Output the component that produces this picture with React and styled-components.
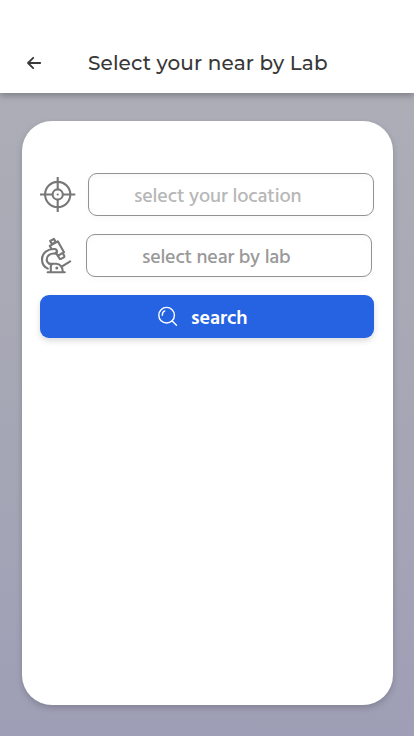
import React from 'react';
import styled, { createGlobalStyle } from 'styled-components';

const GlobalStyle = createGlobalStyle`
  * { box-sizing: border-box; }
  body { margin: 0; }
`;

const Screen = styled.div`
  display: flex;
  flex-direction: column;
  width: 100%;
  height: 100vh;
  overflow: hidden;
  background: linear-gradient(180deg, #afafb7 0%, #a7a8b5 50%, #9e9fb6 100%);
`;

const Header = styled.header`
  display: flex;
  align-items: center;
  flex: none;
  height: 93px;
  padding: 33px 26px 0;
  background: #fff;
  box-shadow: 0 3px 6px rgba(0, 0, 0, 0.25);
`;

const BackButton = styled.button`
  display: flex;
  width: 62px;
  padding: 0;
  border: 0;
  background: none;
  color: #383838;
`;

const Title = styled.h1`
  margin: 0;
  font: 500 20px/26px Montserrat, Inter, sans-serif;
  letter-spacing: 0.12px;
  color: #383838;
  white-space: nowrap;
`;

const Card = styled.main`
  display: flex;
  flex-direction: column;
  gap: 18px;
  flex: 1;
  margin: 28px 21px 31px 22px;
  padding: 52px 19px 0 18px;
  border-radius: 30px;
  background: #fff;
  box-shadow: 0 3px 6px rgba(0, 0, 0, 0.18);
`;

const FieldRow = styled.div`
  display: flex;
  align-items: center;
  gap: ${({ $gap }) => $gap}px;
  height: 43px;

  svg { flex: none; }
`;

const Field = styled.input`
  width: 286px;
  height: 43px;
  padding: 4px 0 0 ${({ $indent }) => $indent}px;
  border: 1px solid #929292;
  border-radius: 9px;
  outline: 0;
  background: #fff;
  box-shadow: 0 3px 6px rgba(0, 0, 0, 0.025), inset 0 3px 6px rgba(0, 0, 0, 0.025);
  font: 500 20px/26px Hind, "Noto Sans", sans-serif;
  letter-spacing: ${({ $tracking }) => $tracking}px;

  &::placeholder {
    color: ${({ $tone }) => $tone};
    opacity: 1;
  }
`;

const SearchButton = styled.button`
  display: flex;
  align-items: center;
  gap: 12px;
  height: 43px;
  padding: 0 0 0 118px;
  border: 0;
  border-radius: 9px;
  background: #2563e2;
  box-shadow: 0 3px 6px rgba(0, 0, 0, 0.14);
  color: #fff;
  font: 600 20px/26px Hind, "Noto Sans", sans-serif;
  letter-spacing: -0.1px;
`;

const ButtonLabel = styled.span`
  padding-top: 4px;
`;

const BackIcon = () => (
  <svg width="16" height="14" viewBox="0 0 16 14" fill="none" stroke="currentColor" strokeWidth="1.8" strokeLinecap="round" strokeLinejoin="round">
    <path d="M7.2 1.8 2 7l5.2 5.2M2.2 7h12" />
  </svg>
);

const TargetIcon = () => (
  <svg width="36" height="36" viewBox="0 0 36 36" fill="none" stroke="#777" strokeWidth="2.1">
    <circle cx="17.7" cy="17.5" r="12.6" />
    <circle cx="17.7" cy="17.5" r="5.1" />
    <path d="M17.7 0v12.4M17.7 22.6V35M0 17.5h12.6M22.8 17.5h12.5" />
    <circle cx="17.7" cy="17.5" r="1.1" fill="#777" stroke="none" />
  </svg>
);

const MicroscopeIcon = () => (
  <svg width="32" height="37" viewBox="0 0 32 37" fill="none" stroke="#777" strokeWidth="2.1" strokeLinecap="round" strokeLinejoin="round">
    <path d="m10.2 4 3.7-2.1 1.8 3.1-3.8 2.2zM9.8 8.9l8-4.6 6.2 10.9-6.3 3.6-1.9-3.2M9.8 8.9l1.8 3.1" />
    <path d="m18.3 19.5 1.2 2c.3.6.9.7 1.5.4l2.8-1.6c.6-.3.7-.9.4-1.5l-1.1-2" />
    <path d="M14.6 12C7.8 11.8 2 15.6 2 22.4c0 4.2 2.2 7.5 5.8 9.2M15.2 16.6c-4.7-.6-8.5 2-8.5 5.8 0 2 .9 3.4 2.7 4.3M14.6 12c3 .2 3.4 4.4.6 4.6" />
    <path d="M9.4 26.7h6.8c3.8 0 6.6 3.5 6.6 8M10.8 35v-5.1c0-1.8.7-3.2 2.3-3.2M22.5 29.2l7.7-4.9M7.6 35.3h17.2" />
    <circle cx="16.8" cy="31.1" r="1.5" fill="#777" stroke="none" />
  </svg>
);

const SearchIcon = () => (
  <svg width="21" height="21" viewBox="0 0 21 21" fill="none" stroke="#fff" strokeWidth="1.4" strokeLinecap="round">
    <circle cx="8.6" cy="9.2" r="7.8" />
    <path d="m14.2 15 4.3 4.2M4.3 9.2c0-2.2 1.2-3.8 2.5-4.3" />
  </svg>
);

export default function App() {
  return (
    <>
      <GlobalStyle />
      <Screen>
        <Header>
          <BackButton aria-label="Back"><BackIcon /></BackButton>
          <Title>Select your near by Lab</Title>
        </Header>
        <Card>
          <FieldRow $gap={12}>
            <TargetIcon />
            <Field placeholder="select your location" $indent={45} $tracking={-0.15} $tone="#b7b7b7" />
          </FieldRow>
          <FieldRow $gap={14}>
            <MicroscopeIcon />
            <Field placeholder="select near by lab" $indent={55} $tracking={-0.22} $tone="#999" />
          </FieldRow>
          <SearchButton>
            <SearchIcon />
            <ButtonLabel>search</ButtonLabel>
          </SearchButton>
        </Card>
      </Screen>
    </>
  );
}
